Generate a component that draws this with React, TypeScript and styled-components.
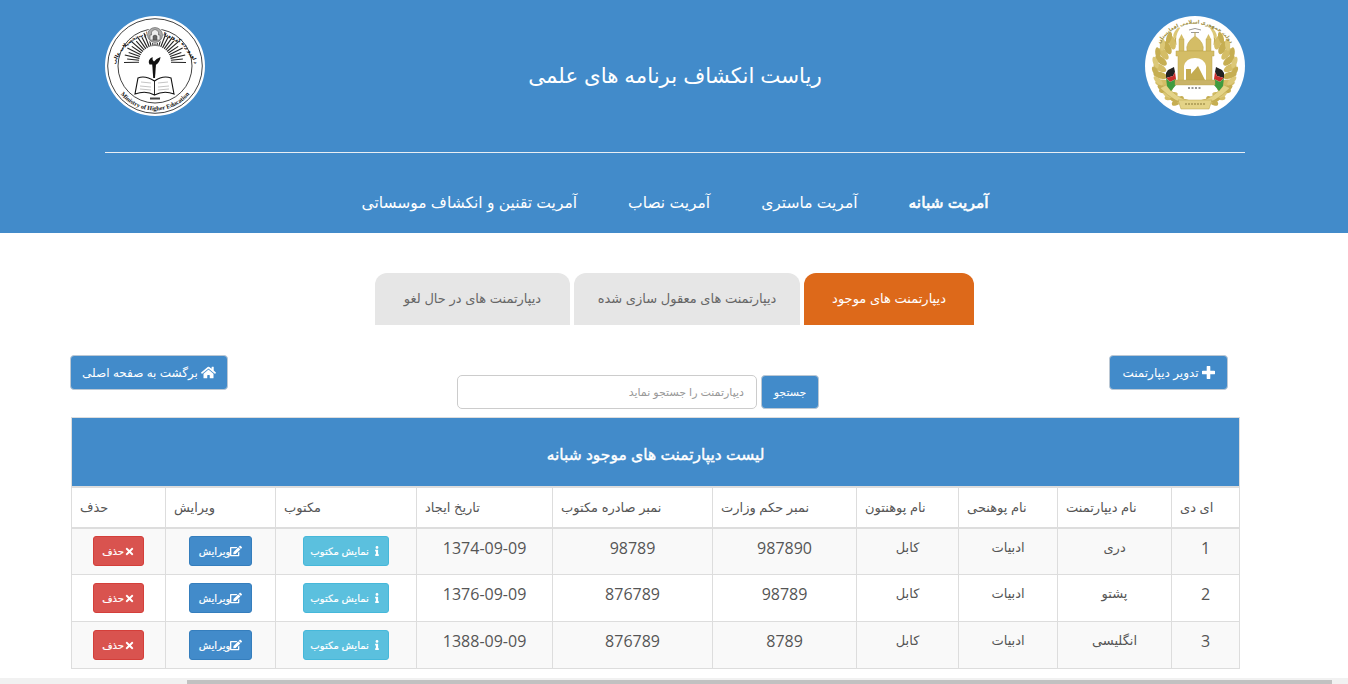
import React from "react";
import styled, { createGlobalStyle } from "styled-components";
import { FaHome, FaInfo, FaEdit, FaTimes } from "react-icons/fa";

const Global = createGlobalStyle`
  html, body { margin: 0; padding: 0; background: #fff; overflow: hidden; }
  body { font-family: "Open Sans", "Liberation Sans", "DejaVu Sans", sans-serif; color: #333; }
  * { box-sizing: border-box; }
`;
const AR = `"Liberation Sans", "DejaVu Sans", sans-serif`;

const Page = styled.div`height: 684px; width: 1348px; display: flex; flex-direction: column; overflow: hidden;`;
const Header = styled.header`background: #428bca; height: 233px; padding: 16px 103px 0 105px; display: flex; flex-direction: column;`;
const TopRow = styled.div`display: flex; justify-content: space-between; align-items: center; height: 100px;`;
const LogoSvg = styled.svg`width: 100px; height: 100px; display: block;`;
const Title = styled.h1`margin: 20px 0 0 0; font: 400 21.3px ${AR}; color: #fff; direction: rtl;`;
const Rule = styled.hr`margin: 36px 0 0; border: 0; border-top: 1px solid #e8eef4; height: 0;`;
const Nav = styled.nav`display: flex; flex-direction: row-reverse; justify-content: center; gap: 51px; margin: 40px 0 0 0; direction: rtl;`;
const NavLink = styled.a<{ $active?: boolean }>`
  font: 400 15.5px/20px ${AR}; color: #fff; white-space: nowrap;
  -webkit-text-stroke: ${(p) => (p.$active ? 0.6 : 0)}px #fff;
`;

const Tabs = styled.div`display: flex; justify-content: center; gap: 4px; margin: 40px 0 0 0; padding-left: 1px; direction: rtl;`;
const Tab = styled.div<{ $active?: boolean; $w: number }>`
  width: ${(p) => p.$w}px; height: 52px; border-radius: 12px 12px 0 0; padding-bottom: 2px;
  background: ${(p) => (p.$active ? "#dd691a" : "#e6e6e6")};
  color: ${(p) => (p.$active ? "#fff" : "#666")};
  display: flex; align-items: center; justify-content: center; font: 400 13px ${AR};
`;

const Toolbar = styled.div`display: flex; align-items: flex-start; padding-left: 70px; margin-top: 30px; height: 62px;`;
const Btn = styled.button<{ $w: number; $h?: number; $size?: number }>`
  width: ${(p) => p.$w}px; height: ${(p) => p.$h ?? 35}px; background: #428bca; color: #fff;
  border: 1px solid #bcc8d4; border-radius: 4px; padding: 0;
  font: 400 ${(p) => p.$size ?? 12}px ${AR}; display: flex; align-items: center; justify-content: center; gap: 3px; direction: rtl;
`;
const SearchForm = styled.form`display: flex; gap: 4px; margin: 20px 0 0 229px;`;
const SearchInput = styled.input`
  width: 300px; height: 34px; border: 1px solid #ccc; border-radius: 5px; padding: 0 12px; direction: rtl;
  font: 400 11px ${AR}; background: #fff;
  &::placeholder { color: #999; opacity: 1; }
`;
const AddWrap = styled.div`margin-left: 290px;`;
const PlusIcon = styled.svg`width: 13px; height: 13px; display: block;`;

const TableWrap = styled.div`margin-left: 71px; width: 1169px;`;
const Table = styled.table`width: 1168px; border-collapse: collapse; table-layout: fixed; direction: rtl; border: 1px solid #ddd;`;
const Caption = styled.th`
  background: #428bca; color: #fff; height: 69px; font: 400 15.5px ${AR}; -webkit-text-stroke: 0.4px #fff;
  text-align: center; padding: 7px 0 0 0; border: 1px solid #ddd; border-bottom: 2px solid #ddd;
`;
const Th = styled.th`height: 41px; padding: 0 8px; font: 400 13px ${AR}; color: #555; text-align: left; border: 1px solid #ddd; border-bottom: 2px solid #ddd;`;
const Tr = styled.tr<{ $odd: boolean }>`background: ${(p) => (p.$odd ? "#f9f9f9" : "#fff")}; height: 47px;`;
const Td = styled.td<{ $ar?: boolean }>`
  border: 1px solid #ddd; text-align: center; vertical-align: top; padding: 9px 8px 0; color: #555;
  font: 400 ${(p) => (p.$ar ? "13px/20px " + AR : `16px/20px "Open Sans", sans-serif`)};
`;
const ActionCell = styled.td`border: 1px solid #ddd; padding: 0; vertical-align: middle;`;
const SmallBtn = styled.button<{ $kind: "info" | "edit" | "del"; $w: number }>`
  width: ${(p) => p.$w}px; height: 30px; margin: 0 auto; padding: 0; border-radius: 3px;
  display: flex; align-items: center; justify-content: center; gap: ${(p) => (p.$kind === "info" ? 3 : 0)}px; color: #fff; direction: rtl;
  font: 400 10px ${AR}; -webkit-text-stroke: 0.2px #fff;
  background: ${(p) => (p.$kind === "info" ? "#5bc0de" : p.$kind === "edit" ? "#428bca" : "#d9534f")};
  border: 1px solid ${(p) => (p.$kind === "info" ? "#46b8da" : p.$kind === "edit" ? "#357ebd" : "#d43f3a")};
`;
const Scrollbar = styled.div`margin-top: auto; height: 6px; background: #f1f1f1; padding: 2px 16px 0 187px;`;
const Thumb = styled.div`height: 4px; background: #c1c1c1;`;

const MinistryLogo = () => {
  const rays = Array.from({ length: 27 }, (_, i) => -91 + i * 7);
  return (
    <LogoSvg viewBox="0 0 100 100">
      <defs>
        <path id="bottomArc" d="M5.5 50 A44.5 44.5 0 0 0 94.5 50" />
        <path id="topArc" d="M9 55 A41.3 41.3 0 0 1 91 55" />
      </defs>
      <circle cx="50" cy="50" r="50" fill="#fff" />
      <circle cx="50" cy="50" r="47.3" fill="none" stroke="#111" strokeWidth="0.8" />
      <circle cx="50" cy="50" r="37" fill="none" stroke="#111" strokeWidth="0.8" />
      <text fontSize="6.2" fontFamily="Liberation Serif, serif" fontWeight="700" fill="#111">
        <textPath href="#bottomArc" startOffset="50%" textAnchor="middle">Ministry of Higher Education</textPath>
      </text>
      <text fontSize="5" fontFamily="Liberation Sans, DejaVu Sans, sans-serif" fontWeight="700" fill="#111">
        <textPath href="#topArc" startOffset="50%" textAnchor="middle">د لوړو زده کړو وزارت  وزارت تحصیلات عالی</textPath>
      </text>
      {rays.map((a, i) => (
        <line key={a} x1="50" y1="30" x2="50" y2={i % 2 ? 18 : 15} stroke="#222" strokeWidth="1.1" transform={`rotate(${a} 50 46)`} />
      ))}
      <circle cx="50" cy="19" r="8.5" fill="#fff" />
      <g stroke="#444" strokeWidth="0.5">
        <circle cx="50" cy="19" r="7.5" fill="#aaa" />
        <path d="M45 24V19H46.5V16Q50 11 53.5 16V19H55V24Z" fill="#eee" />
        <path d="M48 24V20Q50 18 52 20V24Z" fill="#666" />
      </g>
      <path d="M47.2 48H51L50 62H48.2Z" fill="#111" />
      <path d="M44.5 48.5Q42 44 47.5 41Q47 44 49 45.5Q51 42.5 55.5 41Q55 46 51.5 48.5Z" fill="#111" />
      <path d="M49.5 65Q40 59 33 62L30 78Q41 74 49.5 79Q59 74 69 78L66 62Q58 59 49.5 65Z" fill="#fff" stroke="#111" strokeWidth="1.1" />
      <path d="M49.5 65V79" stroke="#111" strokeWidth="0.9" />
      <path d="M36 66L46 67M35 70L46 71M35 73L46 74M53 67L63 66M53 71L64 70M53 74L64 73" stroke="#aaa" strokeWidth="0.7" />
      <rect x="45" y="81.5" width="10" height="2" fill="#444" />
    </LogoSvg>
  );
};

const gold = "#d4bd66";
const goldDark = "#b9a148";
const Emblem = () => {
  const leaves = Array.from({ length: 11 }, (_, i) => i);
  const wreath = (flip: boolean) => (
    <g transform={flip ? "translate(100 0) scale(-1 1)" : undefined}>
      {leaves.map((i) => {
        const t = ((25 + i * 12.5) * Math.PI) / 180;
        const r = 36;
        const x = 50 - r * Math.sin(t);
        const y = 52 + r * Math.cos(t);
        const deg = 90 + 25 + i * 12.5 - 60;
        return (
          <g key={i}>
            <ellipse cx={x - 2 * Math.sin(t)} cy={y + 2 * Math.cos(t)} rx="3.4" ry="7" fill={i % 2 ? gold : "#c6ae52"} transform={`rotate(${deg} ${x} ${y})`} />
            <ellipse cx={x + 4 * Math.sin(t)} cy={y - 4 * Math.cos(t)} rx="2.6" ry="6" fill={i % 2 ? "#c6ae52" : "#dcc877"} transform={`rotate(${deg + 30} ${x} ${y})`} />
          </g>
        );
      })}
      <path d="M15 72Q30 87 46 90L46 85Q32 83 21 69Z" fill="#e4d387" stroke={goldDark} strokeWidth="0.5" />
      <path d="M23 54L21 57L21 62L28 60L30 56L29 51Z" fill="#222" />
      <path d="M21 62L28 60L30 56L31 63L25 66Z" fill="#c9302c" />
      <path d="M21 62L25 66L31 63L31 69L26 75L22 70Z" fill="#3f9b3f" />
    </g>
  );
  return (
    <LogoSvg viewBox="0 0 100 100">
      <defs><path id="emblemArc" d="M11 36 A41 41 0 0 1 89 36" /></defs>
      <circle cx="50" cy="50" r="50" fill="#fff" />
      {wreath(false)}
      {wreath(true)}
      <circle cx="50" cy="24" r="19" fill="#fff" />
      <text fontSize="5.2" fontWeight="700" fontFamily="Liberation Sans, DejaVu Sans, sans-serif" fill="#a08f44">
        <textPath href="#emblemArc" startOffset="50%" textAnchor="middle">دولت جمهوری اسلامی افغانستان</textPath>
      </text>
      <path d="M44 14Q50 11 56 14M46 16.5H54" stroke="#999" strokeWidth="1" fill="none" />
      <rect x="34" y="23" width="5" height="16" fill={gold} stroke={goldDark} strokeWidth="0.4" />
      <rect x="61" y="23" width="5" height="16" fill={gold} stroke={goldDark} strokeWidth="0.4" />
      <path d="M36.5 18L39 23H34ZM63.5 18L66 23H61Z" fill={gold} />
      <path d="M42 35Q40 27 50 20Q60 27 58 35Z" fill={gold} stroke={goldDark} strokeWidth="0.5" />
      <path d="M49.5 16H50.5V20H49.5Z" fill={goldDark} />
      <path d="M31 35H69V40H67V68H33V40H31Z" fill={gold} stroke={goldDark} strokeWidth="0.5" />
      <path d="M39 64V50Q41 42 50 42Q59 42 61 50V64Z" fill="#fff" />
      <path d="M41 64V53H46V58L53 50L60 64Z" fill="#c3ab50" />
      <path d="M30 64H70V69H30Z" fill="#c9b368" stroke={goldDark} strokeWidth="0.4" />
      <path d="M43 72H57" stroke="#777" strokeWidth="1.4" strokeDasharray="2 1.5" />
      <path d="M33 84H67L64 93H36Z" fill="#e4d387" stroke={goldDark} strokeWidth="0.5" />
      <path d="M40 88H60" stroke="#8a7a38" strokeWidth="1.2" strokeDasharray="2 1" />
    </LogoSvg>
  );
};

const cols = [94, 110, 141, 136, 160, 144, 102, 99, 114, 68];
const rows = [
  ["1374-09-09", "98789", "987890", "دری", "1"],
  ["1376-09-09", "876789", "98789", "پشتو", "2"],
  ["1388-09-09", "876789", "8789", "انگلیسی", "3"],
];

export default function App() {
  return (
    <Page>
      <Global />
      <Header>
        <TopRow>
          <MinistryLogo />
          <Title>ریاست انکشاف برنامه های علمی</Title>
          <Emblem />
        </TopRow>
        <Rule />
        <Nav>
          <NavLink>آمریت تقنین و انکشاف موسساتی</NavLink>
          <NavLink>آمریت نصاب</NavLink>
          <NavLink>آمریت ماستری</NavLink>
          <NavLink $active>آمریت شبانه</NavLink>
        </Nav>
      </Header>
      <Tabs>
        <Tab $active $w={170}>دیپارتمنت های موجود</Tab>
        <Tab $w={226}>دیپارتمنت های معقول سازی شده</Tab>
        <Tab $w={195}>دیپارتمنت های در حال لغو</Tab>
      </Tabs>
      <Toolbar>
        <Btn $w={158}><FaHome size={15} /> برگشت به صفحه اصلی</Btn>
        <SearchForm>
          <SearchInput placeholder="دیپارتمنت را جستجو نماید" />
          <Btn type="button" $w={58} $h={34} $size={11}>جستجو</Btn>
        </SearchForm>
        <AddWrap>
          <Btn $w={119} $size={12}>
            <PlusIcon viewBox="0 0 13 13"><path d="M6.5 1V12M1 6.5H12" stroke="#fff" strokeWidth="3.6" strokeLinecap="round" /></PlusIcon>
            تدویر دیپارتمنت
          </Btn>
        </AddWrap>
      </Toolbar>
      <TableWrap>
        <Table>
          <colgroup>
            {[...cols].reverse().map((w, i) => <col key={i} style={{ width: w }} />)}
          </colgroup>
          <thead>
            <tr><Caption colSpan={10}>لیست دیپارتمنت های موجود شبانه</Caption></tr>
            <tr>
              {["ای دی", "نام دیپارتمنت", "نام پوهنحی", "نام پوهنتون", "نمبر حکم وزارت", "نمبر صادره مکتوب", "تاریخ ایجاد", "مکتوب", "ویرایش", "حذف"].map((h) => (
                <Th key={h}>{h}</Th>
              ))}
            </tr>
          </thead>
          <tbody>
            {rows.map((r, i) => (
              <Tr key={r[4]} $odd={i % 2 === 0}>
                <Td>{r[4]}</Td>
                <Td $ar>{r[3]}</Td>
                <Td $ar>ادبیات</Td>
                <Td $ar>کابل</Td>
                <Td>{r[2]}</Td>
                <Td>{r[1]}</Td>
                <Td>{r[0]}</Td>
                <ActionCell><SmallBtn $kind="info" $w={86}><FaInfo size={10} /> نمایش مکتوب</SmallBtn></ActionCell>
                <ActionCell><SmallBtn $kind="edit" $w={63}><FaEdit size={12} />ویرایش</SmallBtn></ActionCell>
                <ActionCell><SmallBtn $kind="del" $w={51}><FaTimes size={11} />حذف</SmallBtn></ActionCell>
              </Tr>
            ))}
          </tbody>
        </Table>
      </TableWrap>
      <Scrollbar><Thumb /></Scrollbar>
    </Page>
  );
}
